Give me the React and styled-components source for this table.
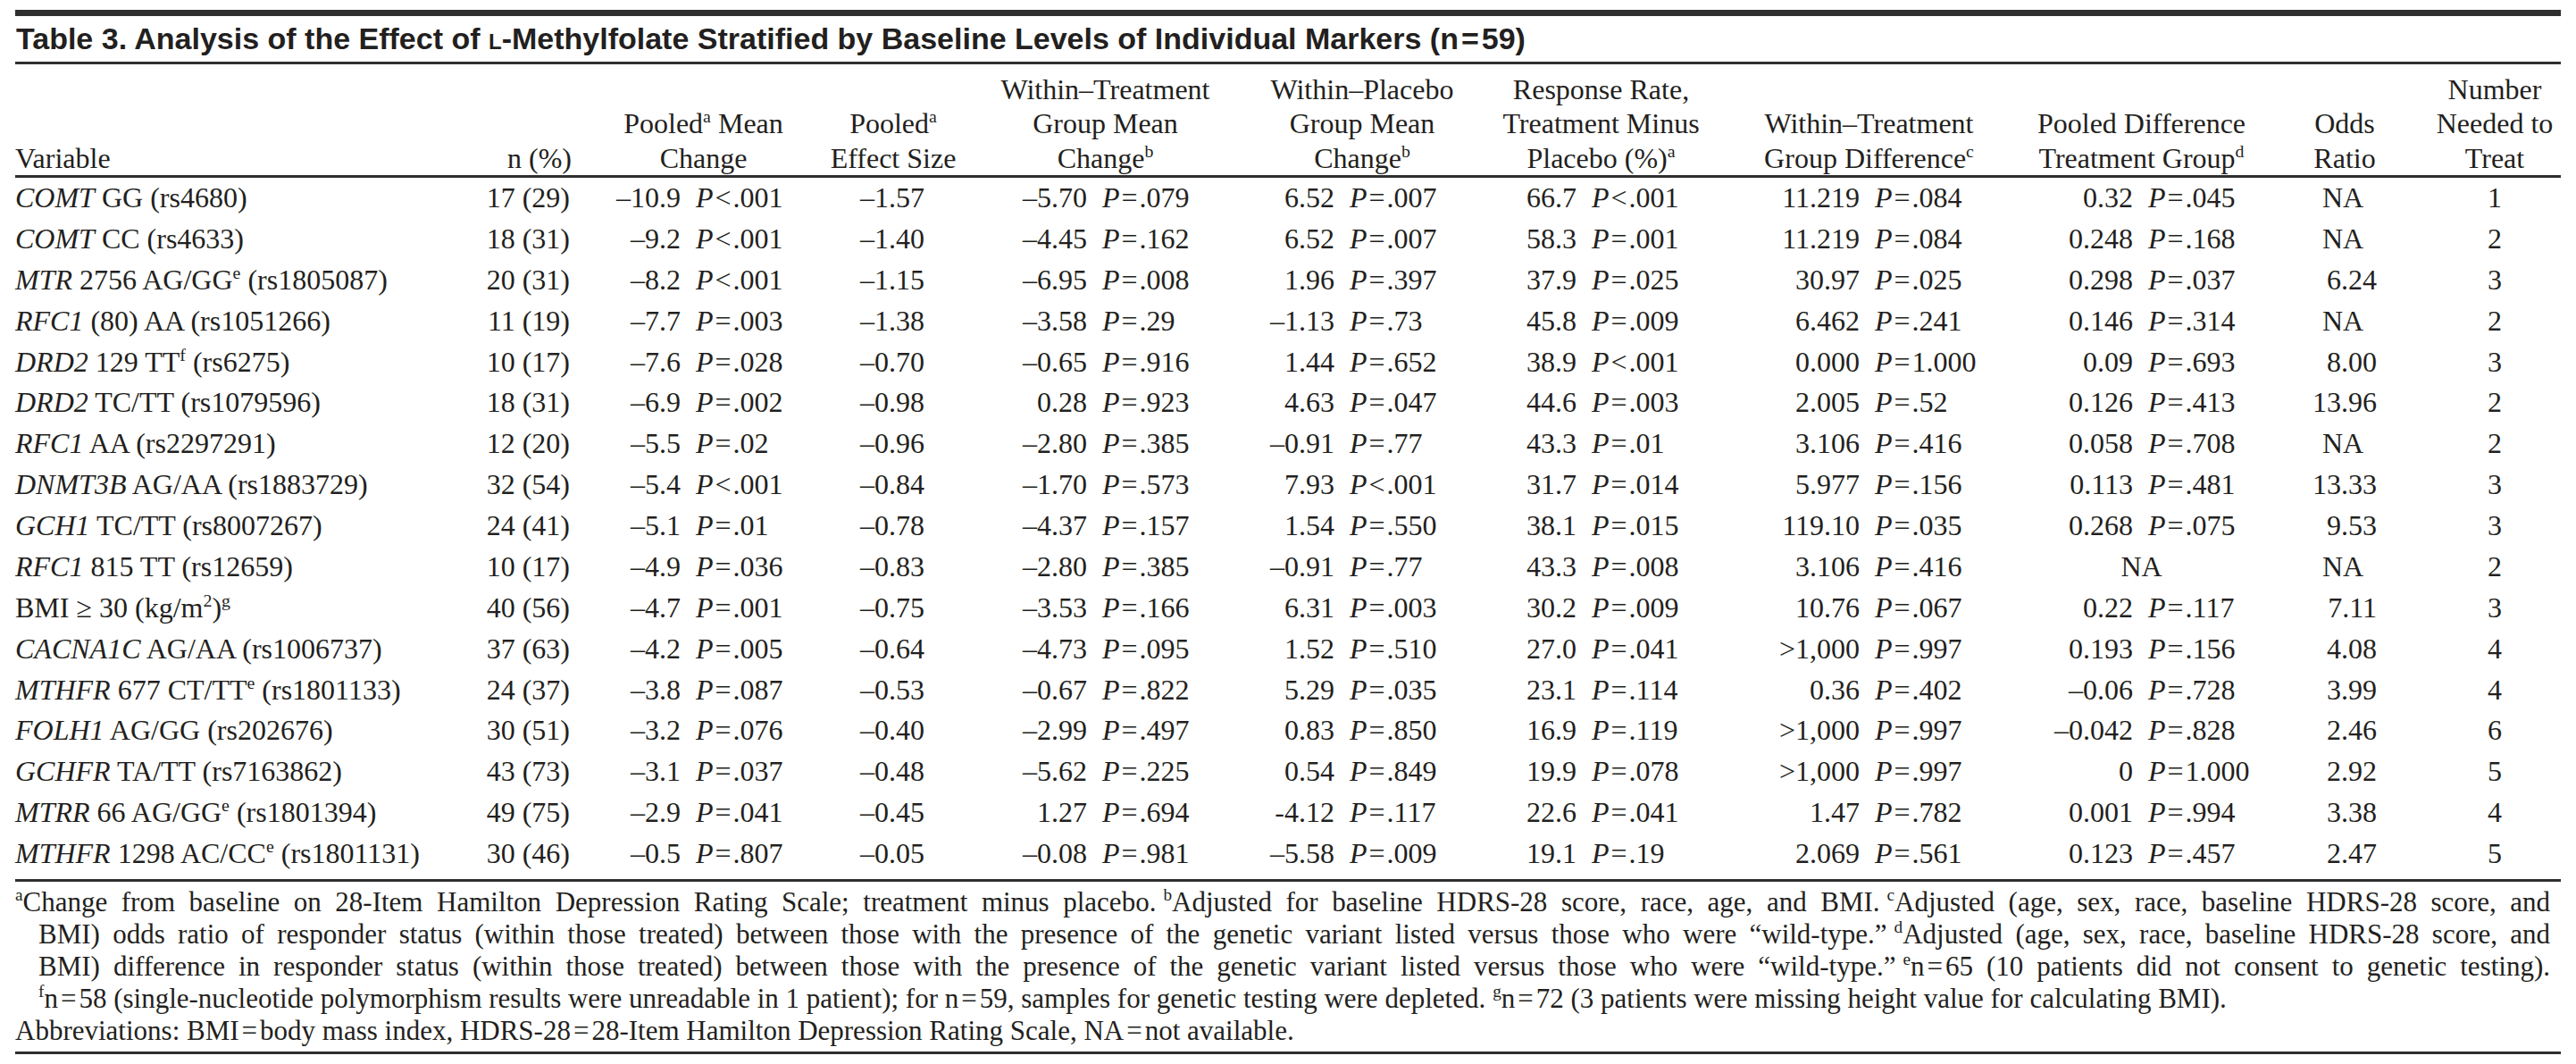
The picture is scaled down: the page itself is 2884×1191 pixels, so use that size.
import React from "react";
import styled, { createGlobalStyle } from "styled-components";

const GlobalStyle = createGlobalStyle`
  html, body { margin: 0; padding: 0; background: #ffffff; }
  body {
    font-family: "Liberation Serif", "Times New Roman", serif;
    color: #231f20;
  }
`;

const COLS = "483px 150px 275px 150px 325px 250px 285px 315px 295px 160px 162px";

const Page = styled.div`
  width: 2884px;
  box-sizing: border-box;
  padding: 11px 17px 0;
`;

const Rule = styled.div`
  height: ${(p) => p.$h}px;
  background: #2f2f2f;
`;

const Title = styled.h1`
  margin: 0;
  height: 51px;
  font-family: "Liberation Sans", Arial, sans-serif;
  font-weight: 700;
  font-size: 34px;
  line-height: 51px;
  letter-spacing: 0;
  white-space: nowrap;
  padding-left: 1px;
`;

const SmallCap = styled.span`
  font-variant: small-caps;
`;

const GridRow = styled.div`
  display: grid;
  grid-template-columns: ${COLS};
  font-size: 32px;
  white-space: nowrap;
`;

const HeadRow = styled(GridRow)`
  height: 124px;
  align-items: end;
  line-height: 38.5px;
`;

const HeadCell = styled.div`
  text-align: ${(p) => p.$align || "center"};
  padding-right: ${(p) => p.$pr || 0}px;
  padding-left: ${(p) => p.$pl || 0}px;
`;

const Body = styled.div`
  padding-bottom: 5px;
`;

const DataRow = styled(GridRow)`
  height: 45.875px;
  line-height: 45.875px;
`;

const VarCell = styled.div`
  text-align: left;
`;

const RightCell = styled.div`
  text-align: right;
  padding-right: ${(p) => p.$pr || 0}px;
`;

const CenterCell = styled.div`
  text-align: center;
  padding-left: ${(p) => p.$pl || 0}px;
`;

const PairCell = styled.div`
  display: grid;
  grid-template-columns: ${(p) => p.$split}px auto;
  column-gap: 17px;
`;

const Num = styled.span`
  text-align: right;
`;

const PText = styled.span`
  text-align: left;
`;

const Ital = styled.i`
  font-style: italic;
`;

const Op = styled.span`
  margin: 0 2px;
`;

const Sup = styled.sup`
  font-size: 0.62em;
  line-height: 0;
  vertical-align: 0.6em;
`;

const OddsBox = styled.span`
  display: inline-block;
  width: 76px;
  text-align: ${(p) => (p.$na ? "center" : "right")};
`;

const Notes = styled.div`
  padding: 5px 0 5px;
  font-size: 31px;
  line-height: 36px;
`;

const NoteLine = styled.div`
  white-space: nowrap;
  padding-left: ${(p) => (p.$indent ? 26 : 0)}px;
  padding-right: ${(p) => (p.$justify ? 12 : 0)}px;
  text-align: ${(p) => (p.$justify ? "justify" : "left")};
  text-align-last: ${(p) => (p.$justify ? "justify" : "left")};
`;

const Gap = styled.span`
  display: inline-block;
  width: 8px;
`;

const Eq = styled.span`
  margin: 0 3px;
`;

const PVal = ({ v }) => (
  <PText>
    <Ital>P</Ital>
    <Op>{v[0]}</Op>
    {v.slice(1)}
  </PText>
);

const Pair = ({ split, val }) => {
  if (val === "NA") return <CenterCell>NA</CenterCell>;
  const [n, p] = val.split(" ");
  return (
    <PairCell $split={split}>
      <Num>{n}</Num>
      <PVal v={p} />
    </PairCell>
  );
};

const rows = [
  [<><Ital>COMT</Ital> GG (rs4680)</>, "17 (29)", "–10.9 <.001", "–1.57", "–5.70 =.079", "6.52 =.007", "66.7 <.001", "11.219 =.084", "0.32 =.045", "NA", "1"],
  [<><Ital>COMT</Ital> CC (rs4633)</>, "18 (31)", "–9.2 <.001", "–1.40", "–4.45 =.162", "6.52 =.007", "58.3 =.001", "11.219 =.084", "0.248 =.168", "NA", "2"],
  [<><Ital>MTR</Ital> 2756 AG/GG<Sup>e</Sup> (rs1805087)</>, "20 (31)", "–8.2 <.001", "–1.15", "–6.95 =.008", "1.96 =.397", "37.9 =.025", "30.97 =.025", "0.298 =.037", "6.24", "3"],
  [<><Ital>RFC1</Ital> (80) AA (rs1051266)</>, "11 (19)", "–7.7 =.003", "–1.38", "–3.58 =.29", "–1.13 =.73", "45.8 =.009", "6.462 =.241", "0.146 =.314", "NA", "2"],
  [<><Ital>DRD2</Ital> 129 TT<Sup>f</Sup> (rs6275)</>, "10 (17)", "–7.6 =.028", "–0.70", "–0.65 =.916", "1.44 =.652", "38.9 <.001", "0.000 =1.000", "0.09 =.693", "8.00", "3"],
  [<><Ital>DRD2</Ital> TC/TT (rs1079596)</>, "18 (31)", "–6.9 =.002", "–0.98", "0.28 =.923", "4.63 =.047", "44.6 =.003", "2.005 =.52", "0.126 =.413", "13.96", "2"],
  [<><Ital>RFC1</Ital> AA (rs2297291)</>, "12 (20)", "–5.5 =.02", "–0.96", "–2.80 =.385", "–0.91 =.77", "43.3 =.01", "3.106 =.416", "0.058 =.708", "NA", "2"],
  [<><Ital>DNMT3B</Ital> AG/AA (rs1883729)</>, "32 (54)", "–5.4 <.001", "–0.84", "–1.70 =.573", "7.93 <.001", "31.7 =.014", "5.977 =.156", "0.113 =.481", "13.33", "3"],
  [<><Ital>GCH1</Ital> TC/TT (rs8007267)</>, "24 (41)", "–5.1 =.01", "–0.78", "–4.37 =.157", "1.54 =.550", "38.1 =.015", "119.10 =.035", "0.268 =.075", "9.53", "3"],
  [<><Ital>RFC1</Ital> 815 TT (rs12659)</>, "10 (17)", "–4.9 =.036", "–0.83", "–2.80 =.385", "–0.91 =.77", "43.3 =.008", "3.106 =.416", "NA", "NA", "2"],
  [<>BMI ≥ 30 (kg/m<Sup>2</Sup>)<Sup>g</Sup></>, "40 (56)", "–4.7 =.001", "–0.75", "–3.53 =.166", "6.31 =.003", "30.2 =.009", "10.76 =.067", "0.22 =.117", "7.11", "3"],
  [<><Ital>CACNA1C</Ital> AG/AA (rs1006737)</>, "37 (63)", "–4.2 =.005", "–0.64", "–4.73 =.095", "1.52 =.510", "27.0 =.041", ">1,000 =.997", "0.193 =.156", "4.08", "4"],
  [<><Ital>MTHFR</Ital> 677 CT/TT<Sup>e</Sup> (rs1801133)</>, "24 (37)", "–3.8 =.087", "–0.53", "–0.67 =.822", "5.29 =.035", "23.1 =.114", "0.36 =.402", "–0.06 =.728", "3.99", "4"],
  [<><Ital>FOLH1</Ital> AG/GG (rs202676)</>, "30 (51)", "–3.2 =.076", "–0.40", "–2.99 =.497", "0.83 =.850", "16.9 =.119", ">1,000 =.997", "–0.042 =.828", "2.46", "6"],
  [<><Ital>GCHFR</Ital> TA/TT (rs7163862)</>, "43 (73)", "–3.1 =.037", "–0.48", "–5.62 =.225", "0.54 =.849", "19.9 =.078", ">1,000 =.997", "0 =1.000", "2.92", "5"],
  [<><Ital>MTRR</Ital> 66 AG/GG<Sup>e</Sup> (rs1801394)</>, "49 (75)", "–2.9 =.041", "–0.45", "1.27 =.694", "-4.12 =.117", "22.6 =.041", "1.47 =.782", "0.001 =.994", "3.38", "4"],
  [<><Ital>MTHFR</Ital> 1298 AC/CC<Sup>e</Sup> (rs1801131)</>, "30 (46)", "–0.5 =.807", "–0.05", "–0.08 =.981", "–5.58 =.009", "19.1 =.19", "2.069 =.561", "0.123 =.457", "2.47", "5"],
];

export default function App() {
  return (
    <Page>
      <GlobalStyle />
      <Rule $h={7} />
      <Title>
        Table 3. Analysis of the Effect of <SmallCap>l</SmallCap>-Methylfolate Stratified by Baseline Levels of
        Individual Markers (n<Eq>=</Eq>59)
      </Title>
      <Rule $h={3} />
      <HeadRow>
        <HeadCell $align="left">Variable</HeadCell>
        <HeadCell $align="right" $pr={10}>n (%)</HeadCell>
        <HeadCell>
          Pooled<Sup>a</Sup> Mean
          <br />
          Change
        </HeadCell>
        <HeadCell>
          Pooled<Sup>a</Sup>
          <br />
          Effect Size
        </HeadCell>
        <HeadCell>
          Within–Treatment
          <br />
          Group Mean
          <br />
          Change<Sup>b</Sup>
        </HeadCell>
        <HeadCell>
          Within–Placebo
          <br />
          Group Mean
          <br />
          Change<Sup>b</Sup>
        </HeadCell>
        <HeadCell>
          Response Rate,
          <br />
          Treatment Minus
          <br />
          Placebo (%)<Sup>a</Sup>
        </HeadCell>
        <HeadCell>
          Within–Treatment
          <br />
          Group Difference<Sup>c</Sup>
        </HeadCell>
        <HeadCell>
          Pooled Difference
          <br />
          Treatment Group<Sup>d</Sup>
        </HeadCell>
        <HeadCell>
          Odds
          <br />
          Ratio
        </HeadCell>
        <HeadCell $pl={14}>
          Number
          <br />
          Needed to
          <br />
          Treat
        </HeadCell>
      </HeadRow>
      <Rule $h={3} />
      <Body>
        {rows.map((r, i) => (
          <DataRow key={i}>
            <VarCell>{r[0]}</VarCell>
            <RightCell $pr={12}>{r[1]}</RightCell>
            <Pair split={112} val={r[2]} />
            <RightCell $pr={40}>{r[3]}</RightCell>
            <Pair split={142} val={r[4]} />
            <Pair split={94} val={r[5]} />
            <Pair split={115} val={r[6]} />
            <Pair split={147} val={r[7]} />
            <Pair split={138} val={r[8]} />
            <RightCell $pr={44}>
              <OddsBox $na={r[9] === "NA"}>{r[9]}</OddsBox>
            </RightCell>
            <CenterCell $pl={14}>{r[10]}</CenterCell>
          </DataRow>
        ))}
      </Body>
      <Rule $h={3} />
      <Notes>
        <NoteLine $justify>
          <Sup>a</Sup>Change from baseline on 28-Item Hamilton Depression Rating Scale; treatment minus placebo.<Gap />
          <Sup>b</Sup>Adjusted for baseline HDRS-28 score, race, age, and BMI.<Gap />
          <Sup>c</Sup>Adjusted (age, sex, race, baseline HDRS-28 score, and
        </NoteLine>
        <NoteLine $justify $indent>
          BMI) odds ratio of responder status (within those treated) between those with the presence of the genetic
          variant listed versus those who were “wild-type.”<Gap />
          <Sup>d</Sup>Adjusted (age, sex, race, baseline HDRS-28 score, and
        </NoteLine>
        <NoteLine $justify $indent>
          BMI) difference in responder status (within those treated) between those with the presence of the genetic
          variant listed versus those who were “wild-type.”<Gap />
          <Sup>e</Sup>n<Eq>=</Eq>65 (10 patients did not consent to genetic testing).
        </NoteLine>
        <NoteLine $indent>
          <Sup>f</Sup>n<Eq>=</Eq>58 (single-nucleotide polymorphism results were unreadable in 1 patient); for
          n<Eq>=</Eq>59, samples for genetic testing were depleted.<Gap />
          <Sup>g</Sup>n<Eq>=</Eq>72 (3 patients were missing height value for calculating BMI).
        </NoteLine>
        <NoteLine>
          Abbreviations: BMI<Eq>=</Eq>body mass index, HDRS-28<Eq>=</Eq>28-Item Hamilton Depression Rating Scale,
          NA<Eq>=</Eq>not available.
        </NoteLine>
      </Notes>
      <Rule $h={3} />
    </Page>
  );
}
